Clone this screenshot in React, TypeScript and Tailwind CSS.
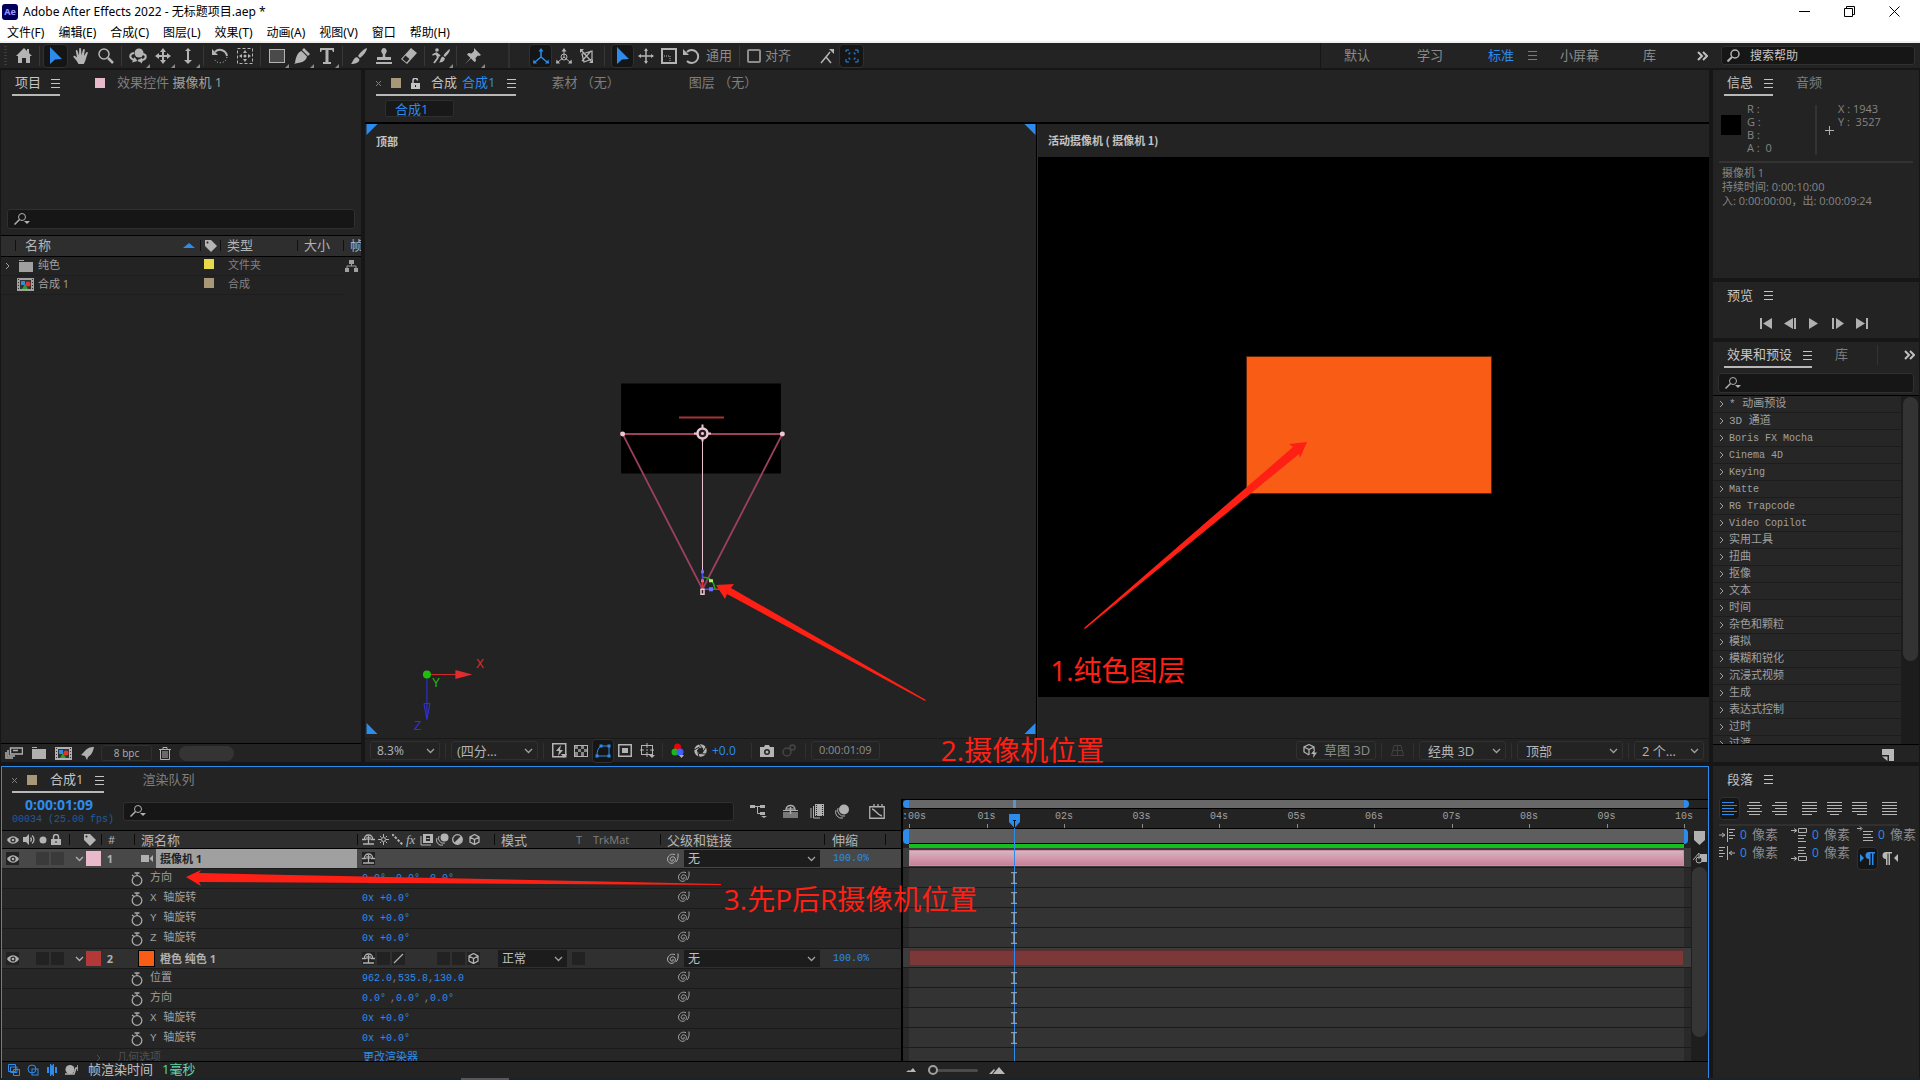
import React from "react";

type Kids = { children?: React.ReactNode };

/* ---------- icons ---------- */

function Ic({ children, w = 16, h = 16, vb, className = "" }: Kids & { w?: number; h?: number; vb?: string; className?: string }) {
  return (
    <svg width={w} height={h} viewBox={vb ?? `0 0 ${w} ${h}`} className={`shrink-0 ${className}`} fill="currentColor" aria-hidden="true">
      {children}
    </svg>
  );
}

const line = { fill: "none", stroke: "currentColor" } as const;

const Home = () => <Ic><path d="M8 0 0 8h2v7h4v-5h4v5h4V8h2L13 5V1h-2v2z" /></Ic>;
const Cursor = () => <Ic w={14} h={18}><path d="M1 0v17l5-4.500 7-.5z" /></Ic>;
const Hand = () => (
  <Ic><path d="M5.500 16C4 13 2.500 11.500.5 9c-.5-1 .8-1.800 1.700-1L4 9.500 2.800 3c-.2-1.200 1.400-1.500 1.700-.3L6 7.500 6.200 1c0-1.300 1.800-1.300 1.900 0l.3 6.300L10 1.700c.4-1.200 2-.9 1.800.4L10.900 8l2.300-3.600c.7-1 2.100-.3 1.600.9-1.500 3.200-1.800 7-4 10.700z" /></Ic>
);
const Lens = () => <Ic><circle cx="6" cy="6" r="5" {...line} strokeWidth="1.500" /><path d="m10 10 5 5" {...line} strokeWidth="2.500" /></Ic>;
const Orbit = () => (
  <Ic w={18}>
    <circle cx="10" cy="5" r="4.500" />
    <path d="M5 5C0 6 0 10 5 12M13 6c5 0 5 5 0 6M9 12.500h5" {...line} strokeWidth="2" />
    <path d="m3 14.500 5.500-1.500-3-4zM9 12.500l4-3v6z" />
  </Ic>
);
const Move4 = () => <Ic><path d="M8 0 5 4h2v3H4V5L0 8l4 3V9h3v3H5l3 4 3-4H9V9h3v2l4-3-4-3v2H9V4h2z" /></Ic>;
const Dolly = () => <Ic w={12}><path d="M5 2h2v10h3l-4 4-4-4h3zM3 3l3-3 3 3z" /></Ic>;
const Rotate = () => (
  <Ic><path d="M3 4c4-4 11-2 12 4" {...line} strokeWidth="2" /><path d="M0 1v6h6z" /><path d="M15 9c-1 7-11 8-13 1" {...line} strokeDasharray="1 2" /></Ic>
);
const AnchorTool = () => (
  <Ic><rect x=".5" y=".5" width="15" height="15" {...line} strokeDasharray="3 2" /><path d="m8 2 2 3H6zM8 14l2-3H6zM2 8l3-2v4zM14 8l-3-2v4z" /><circle cx="8" cy="8" r="1.500" /></Ic>
);
const RectTool = () => <Ic><rect x=".5" y="1.500" width="15" height="13" fill="#4a4a4a" stroke="currentColor" /></Ic>;
const Pen = () => <Ic><path d="M10 0 16 6l-2 2-6-6zM7.500 3 13 8.500c-1 4-4 6-11.500 7L0 16l5.500-6a2 2 0 1 1 1 1L2 14.500 1 15C2 8 4 4 7.500 3z" /></Ic>;
const TypeTool = () => <Ic w={14}><path d="M0 0h14v4h-1l-1-2H8.500v12H11v2H3v-2h2.500V2H2L1 4H0z" /></Ic>;
const Brush = () => <Ic><path d="M16 0c0 3-4 8-7 10L7 8c2-4 6-7 9-8zM6 9l2.500 2.500C8 15 4 16 0 16c2-2 2-6 6-7z" /></Ic>;
const Stamp = () => <Ic><path d="M8 0a3 3 0 0 1 2 5c-1 1-1 3-.5 4H15v3H1V9h5.500c.5-1 .5-3-.5-4a3 3 0 0 1 2-5zM0 14h16v2H0z" /></Ic>;
const Eraser = () => <Ic><path d="M10 0 16 5 6 16 0 11z" /><path d="m1.500 11 3-3.500 4 3.500-3 3.500z" fill="#232323" /></Ic>;
const Roto = () => (
  <Ic w={18}><circle cx="5" cy="2" r="1.800" /><path d="M.5 7 4 5.500 6 9l-1 2-3 4M4 5l4 3" {...line} strokeWidth="1.800" /><path d="M18 1c0 3-3 6-5 8l-1.500-1.500C13 5 16 2 18 1zM11 8.500l2 2c-1 3-3 4-6 4 2-2 1-5 4-6z" /></Ic>
);
const Pin = () => <Ic><path d="M9 0 16 7l-2 1-1-.5L10.500 10l.5 3-1.500 1-3.500-3.500L0 16l5.500-6L2 6.500 3.500 5l3 .5L9 3z" /></Ic>;
const AxisLocal = () => <Ic><path d="M8 9V2M8 9l-6 5M8 9l6 5" {...line} strokeWidth="1.500" /><path d="m8 0 2.500 3.500h-5zM0 15.500l.5-4 3.500 4zM16 15.500l-.5-4-3.500 4z" /></Ic>;
const AxisWorld = () => <Ic><path d="M8 9V2M8 9l-6 5M8 9l6 5" {...line} /><circle cx="8" cy="9" r="3" {...line} /><path d="m8 0 2.500 3.500h-5zM0 15.500l.5-4 3.500 4zM16 15.500l-.5-4-3.500 4z" /></Ic>;
const AxisView = () => <Ic><path d="M3 6l10-3v8l-8 3zM2 2l10 11M12 3 3 13" {...line} strokeWidth="1.300" /><path d="M1 1h4L1 5zM14 15v-4l-4 4z" /></Ic>;
const Plus4 = () => <Ic><path d="M8 1v14M1 8h14" {...line} strokeWidth="1.500" /><path d="m8 0 2 3H6zM8 16l2-3H6zM0 8l3-2v4zM16 8l-3-2v4z" /></Ic>;
const ScaleBox = () => <Ic><rect x="1" y="1" width="14" height="14" {...line} strokeWidth="2" /><path d="M3 8h6v6" {...line} strokeDasharray="1 1" /></Ic>;
const RotateCcw = () => <Ic w={17}><path d="M4 4a6.500 6.500 0 1 1 0 9" {...line} strokeWidth="2" /><path d="M0 1v6h6z" /></Ic>;
const SnapA = () => <Ic w={14}><path d="M1 15 6 9l5 6M6 9l4-5" {...line} strokeWidth="1.500" /><path d="M9 1h5v5z" /></Ic>;
const SnapB = () => <Ic><path d="M2 4V2h3M11 2h3v3M14 11v3h-3M5 14H2v-3M5 6.500V5h1.500M9.500 5H11v1.500M11 9.500V11H9.500M6.500 11H5V9.500" {...line} /></Ic>;
const Ham = () => <Ic w={9} h={9}><path d="M0 0h9v1H0zM0 4h9v1H0zM0 8h9v1H0z" /></Ic>;
const More = () => <Ic w={11} h={10}><path d="m1 1 4 4-4 4M6 1l4 4-4 4" {...line} strokeWidth="2" /></Ic>;
const SearchDown = () => <Ic w={16} h={12}><circle cx="8" cy="4" r="3.500" {...line} /><path d="m5.500 6.500-5 5" {...line} strokeWidth="1.500" /><path d="M10 8h6l-3 3z" /></Ic>;
const SearchIc = () => <Ic w={13} h={13}><circle cx="8" cy="5" r="4" {...line} strokeWidth="1.500" /><path d="m5 8-4.500 4.500" {...line} strokeWidth="2" /></Ic>;
const Tag = () => <Ic w={13} h={13}><path d="M1 1h6l6 6-6 6-6-6z" /><circle cx="3.500" cy="3.500" r="1" fill="#232323" /></Ic>;
const ChevR = () => <Ic w={5} h={8}><path d="m1 1 3 3-3 3" {...line} /></Ic>;
const ChevD = () => <Ic w={9} h={6}><path d="m1 1 3.500 3.500L8 1" {...line} strokeWidth="1.300" /></Ic>;
const Folder = () => <Ic w={14} h={12}><path d="M0 0h5v1H0zM0 2h14v10H0z" /></Ic>;
const CompIc = () => (
  <Ic w={17} h={13}><path d="M0 0h17v13H0z" /><path d="M3 2h11v9H3z" fill="#333" /><path d="M1.500 1v12M15.500 1v12" stroke="#333" strokeDasharray="1 2" /><path d="M4 3h4v4H4z" fill="#2d8ceb" /><circle cx="11" cy="6" r="2.500" fill="#e0352b" /><path d="m8 6 3 5H5z" fill="#2ca02c" /></Ic>
);
const Flow = () => <Ic w={13} h={12}><path d="M4 0h5v4H4zM0 8h4v4H0zM9 8h4v4H9z" /><path d="M6.500 4v2M2 8V6h9v2" {...line} /></Ic>;
const Trash = () => <Ic w={12} h={13}><path d="M0 2.500h12M4 2V.500h4V2M1.500 3v9.500h9V3M4 4v7M6 4v7M8 4v7" {...line} /></Ic>;
const Rocket = () => <Ic w={13} h={13}><path d="M13 0c-1 6-4 9-6 10l-1 3-2-4L0 8l3-3c3-4 6-5 10-5z" /></Ic>;
const Interpret = () => <Ic w={18} h={12}><rect x="5.500" y="1" width="12" height="6" {...line} strokeWidth="1.500" /><path d="M8 3.500h5M3 3v6h7M1 5v6h7" {...line} strokeWidth="1.500" /></Ic>;
const LockOpen = () => <Ic w={9} h={11}><path d="M2 5V2.500a2 2 0 0 1 4.500 0" {...line} strokeWidth="1.500" /><path d="M0 5h9v6H0z" /><path d="M4 7h1v2H4z" fill="#232323" /></Ic>;
const LockIc = () => <Ic w={10} h={11}><path d="M2.500 5V3a2.500 2.500 0 0 1 5 0v2" {...line} strokeWidth="1.500" /><path d="M0 5h10v6H0z" /><path d="M4.500 7h1v2h-1z" fill="#232323" /></Ic>;
const Eye = () => <Ic w={12} h={8}><path d="M0 4c3-5 9-5 12 0-3 5-9 5-12 0z" /><circle cx="6" cy="4" r="2.600" fill="#2a2a2a" /><circle cx="6" cy="4" r="1.300" /></Ic>;
const Speaker = () => <Ic w={12} h={11}><path d="M0 3h3l3-3v11L3 8H0z" /><path d="M7.500 3.500a3 3 0 0 1 0 4M9 1.500a5 5 0 0 1 0 8" {...line} strokeWidth="1.300" /></Ic>;
const Solo = () => <Ic w={8} h={8}><circle cx="4" cy="4" r="3.500" /></Ic>;
const Shy = () => <Ic w={13} h={11}><path d="M2.500 5.500c-1-6 9-6 8 0M0 5.500h4M9 5.500h4M6.500 2v8M1 10h11" {...line} strokeWidth="1.300" /><path d="M4 3h5v3H4z" opacity=".6" /></Ic>;
const Sun = () => <Ic w={11} h={11}><circle cx="5.500" cy="5.500" r="2" {...line} /><path d="M5.500 0v3M5.500 8v3M0 5.500h3M8 5.500h3M2 2l1.500 1.500M7.500 7.500 9 9M9 2 7.500 3.500M3.500 7.500 2 9" {...line} /></Ic>;
const Quality = () => <Ic w={11} h={11}><path d="m0 0 11 11" {...line} strokeWidth="2" strokeDasharray="2.500 1.500" /></Ic>;
const FrameBlend = () => <Ic w={13} h={12}><path d="M3 0h10v9H3z" /><path d="M6 2h4v5H6z" fill="#2a2a2a" /><path d="M6.500 4h3v1h-3z" /><path d="M1 2v9h10" {...line} /></Ic>;
const MBlur = () => <Ic w={13} h={13}><circle cx="8.500" cy="4.500" r="4" /><path d="M3 3a5 5 0 0 0 6 7M1 5a5 5 0 0 0 6 7" {...line} /></Ic>;
const Adjust = () => <Ic w={11} h={11}><circle cx="5.500" cy="5.500" r="4.800" {...line} strokeWidth="1.300" /><path d="M9 2a5 5 0 0 1-7 7z" /></Ic>;
const Cube = () => <Ic w={11} h={11}><path d="M5.500.5 10 3v5l-4.500 2.500L1 8V3zM1 3l4.500 2.500L10 3M5.500 5.500v5" {...line} strokeWidth="1.300" /></Ic>;
const Whip = () => <Ic w={13} h={12}><path d="M6.500 6.500c.8-.8 1.500.5.5 1.300-1.500 1-3.200-.3-2.700-2.300.6-2 3.500-2.300 4.700-.5 1.200 2.200-.3 5-3 5.300C3 10.500.8 8 1.700 5 2.500 2 6 .3 9 1.700M12 .5c.3 4 0 6-2 8.500" {...line} /></Ic>;
const Watch = () => <Ic w={12} h={14}><circle cx="6" cy="8.500" r="4.800" {...line} strokeWidth="1.300" /><path d="M6 1v3M3.500 1h5M1 3l2 1.500" {...line} strokeWidth="1.300" /></Ic>;
const Camcorder = () => <Ic w={12} h={9}><path d="M0 1h8v7H0zM8.500 4.500 12 1v7z" /></Ic>;
const Slash = () => <Ic w={11} h={11}><path d="m1 10 9-9" {...line} strokeWidth="1.300" /></Ic>;
const IBeam = () => <Ic w={8} h={12}><path d="M1 .5h6M1 11.500h6M4 0v12" {...line} strokeWidth="1.500" /></Ic>;
const CloseX = () => <Ic w={5} h={5} className="text-[#808080]"><path d="m0 0 5 5M5 0 0 5" {...line} /></Ic>;

/* ---------- shared parts ---------- */

const cjk = "font-['Open_Sans','Noto_Sans_CJK_SC',sans-serif]";
const mono = "font-['Liberation_Mono','Noto_Sans_CJK_SC',monospace]";

const TOOL_W = { wide: "w-[25px]", mid: "w-[23px]", small: "w-[22px]" };

function Tool({ children, on, more, label, size = "wide" }: Kids & { on?: boolean; more?: boolean; label: string; size?: keyof typeof TOOL_W }) {
  return (
    <button
      aria-label={label}
      className={`relative flex h-6 items-center justify-center rounded-sm ${TOOL_W[size]} ${on ? "border border-[#303030] bg-[#151515] text-[#2d8ceb]" : ""}`}
    >
      {children}
      {more && <span className="absolute right-0 bottom-0 border-b-[4px] border-l-[4px] border-b-[#8a8a8a] border-l-transparent" />}
    </button>
  );
}

const Sep = () => <span className="mx-[3px] h-5 w-px shrink-0 bg-[#383838]" />;

function Tab({ children, on = true }: Kids & { on?: boolean }) {
  return (
    <button className={`flex h-[26px] items-center border-b-2 pt-[2px] whitespace-nowrap ${on ? "border-[#b8b8b8] text-[#c4c4c4]" : "border-transparent text-[#7e7e7e]"}`}>
      {children}
    </button>
  );
}

function Pick({ value, label, className }: { value: string; label: string; className: string }) {
  return (
    <span className={`relative flex items-center ${className}`}>
      <select aria-label={label} defaultValue={value} className="h-full w-full appearance-none bg-transparent pr-4 pl-1 outline-none">
        <option>{value}</option>
      </select>
      <span className="pointer-events-none absolute right-1 text-[#a0a0a0]"><ChevD /></span>
    </span>
  );
}

function SearchBox({ label, className }: { label: string; className: string }) {
  return (
    <label className={`flex items-center rounded-[3px] border border-[#303030] bg-[#161616] pl-[6px] text-[#b0b0b0] ${className}`}>
      <SearchDown />
      <input aria-label={label} className="ml-1 h-full min-w-0 flex-1 bg-transparent outline-none" />
    </label>
  );
}

const swatch = "inline-block size-[10px] shrink-0";

/* ---------- top bars ---------- */

const MENUS = ["文件(F)", "编辑(E)", "合成(C)", "图层(L)", "效果(T)", "动画(A)", "视图(V)", "窗口", "帮助(H)"];

function WindowBars() {
  return (
    <header className="shrink-0 border-b-2 border-[#f0f0f0] bg-white font-['Noto_Sans','Noto_Sans_CJK_SC',sans-serif] text-[12px] text-black">
      <div className="flex h-[23px] items-center pl-[2px]">
        <span className="flex size-4 items-center justify-center rounded-[3px] bg-[#00005b] text-[9px] font-bold text-[#9999ff]">Ae</span>
        <h1 className="ml-[5px]">Adobe After Effects 2022 - 无标题项目.aep *</h1>
        <div className="ml-auto flex h-full items-center gap-[34px] pr-5">
          <button aria-label="最小化"><Ic w={11} h={11}><path d="M0 5h11v1H0z" /></Ic></button>
          <button aria-label="还原"><Ic w={11} h={11}><path d="M.5 2.500h8v8h-8zM2.500 2V.500h8v8H9" {...line} /></Ic></button>
          <button aria-label="关闭"><Ic w={11} h={11}><path d="m.5.500 10 10M10.500.500l-10 10" {...line} /></Ic></button>
        </div>
      </div>
      <nav className="flex h-[18px] items-center gap-[14px] pt-[2px] pl-[7px]">
        {MENUS.map((m) => <button key={m}>{m}</button>)}
      </nav>
    </header>
  );
}

function Toolbar() {
  return (
    <div className="flex h-[25px] shrink-0 items-center bg-[#232323] text-[13px] text-[#b4b4b4]">
      <span className="mx-[4px] h-5 w-[3px] bg-[repeating-linear-gradient(#3c3c3c_0_1px,transparent_1px_3px)]" />
      <Tool label="主页"><Home /></Tool><Sep />
      <Tool label="选取" on><Cursor /></Tool>
      <Tool label="手形"><Hand /></Tool>
      <Tool label="缩放"><Lens /></Tool><Sep />
      <Tool label="绕光标旋转" more><Orbit /></Tool>
      <Tool label="平移" more><Move4 /></Tool>
      <Tool label="推拉" more><Dolly /></Tool><Sep />
      <Tool label="旋转"><Rotate /></Tool>
      <Tool label="锚点"><AnchorTool /></Tool><Sep />
      <Tool label="矩形" more><RectTool /></Tool>
      <Tool label="钢笔" more><Pen /></Tool>
      <Tool label="文字" more><TypeTool /></Tool><Sep />
      <Tool label="画笔"><Brush /></Tool>
      <Tool label="仿制图章"><Stamp /></Tool>
      <Tool label="橡皮擦"><Eraser /></Tool><Sep />
      <Tool label="Roto 笔刷" more><Roto /></Tool><Sep />
      <Tool label="人偶位置" more><Pin /></Tool>
      <span className="mr-[19px] ml-[23px] h-full w-[2px] bg-[#303030]" />
      <Tool label="本地轴" on size="mid"><AxisLocal /></Tool>
      <Tool label="世界轴" size="mid"><AxisWorld /></Tool>
      <Tool label="视图轴" size="mid"><AxisView /></Tool>
      <span className="mx-[6px] h-5 w-px bg-[#383838]" />
      <Tool label="选择" on size="mid"><Cursor /></Tool>
      <Tool label="位置" size="mid"><Plus4 /></Tool>
      <Tool label="缩放模式" size="mid"><ScaleBox /></Tool>
      <Tool label="旋转模式" size="mid"><RotateCcw /></Tool>
      <button className="ml-[3px] text-[#8c8c8c]">通用</button>
      <span className="mx-[7px] h-5 w-px bg-[#383838]" />
      <label className="flex items-center gap-1 text-[#8c8c8c]">
        <input type="checkbox" className="size-[14px] appearance-none rounded-[2px] border-2 border-[#8c8c8c]" />
        对齐
      </label>
      <span className="ml-[23px] flex">
        <Tool label="对齐边缘"><SnapA /></Tool>
        <Tool label="对齐特征" on><SnapB /></Tool>
      </span>
      <nav className="ml-auto flex h-full items-center border-l border-[#161616] pl-[23px] text-[#8c8c8c]">
        <button className="mr-[47px]">默认</button>
        <button className="mr-[45px]">学习</button>
        <button className="mr-[14px] text-[#2d8ceb]">标准</button>
        <button aria-label="工作区菜单" className="mr-[23px] text-[#2d8ceb]"><Ham /></button>
        <button className="mr-[44px]">小屏幕</button>
        <button className="mr-[41px]">库</button>
        <button aria-label="更多" className="mr-[11px] text-[#c0c0c0]"><More /></button>
      </nav>
      <label className="mr-[5px] ml-[2px] flex h-[19px] w-[194px] items-center rounded-[3px] border border-[#303030] bg-[#161616] pl-[5px]">
        <SearchIc />
        <input aria-label="搜索帮助" placeholder="搜索帮助" className="ml-[10px] min-w-0 flex-1 bg-transparent text-[12px] outline-none placeholder:text-[#c4c4c4]" />
      </label>
    </div>
  );
}

/* ---------- project ---------- */

function ProjectPanel() {
  const th = "border-y border-black bg-[#2e2e2e] p-0 text-left font-normal";
  const bar = "my-[4px] h-[11px] w-px shrink-0 bg-[#111]";
  return (
    <section className="flex w-[360px] shrink-0 flex-col overflow-hidden bg-[#232323]">
      <div className="flex pl-[11px] text-[13px]">
        <Tab><span className="mr-[10px] ml-[3px]">项目</span><Ham /></Tab>
        <span className="w-[35px]" />
        <Tab on={false}><i className={`${swatch} mr-3 bg-[#e8b8cb]`} />效果控件&nbsp;<span className="text-[#a0a0a0]">摄像机 1</span></Tab>
      </div>
      <div className="h-[113px]" />
      <SearchBox label="搜索项目" className="mx-[6px] mb-[6px] h-5 shrink-0" />
      <table className="w-full table-fixed border-separate border-spacing-0 text-[11px] text-[#a0a0a0]">
        <colgroup><col className="w-[199px]" /><col className="w-[20px]" /><col className="w-[77px]" /><col className="w-[46px]" /><col /></colgroup>
        <thead className="text-[13px] text-[#b4b4b4]">
          <tr className="h-5">
            <th className={th}><span className="flex items-center"><i className={`${bar} mr-[9px] ml-[14px]`} />名称<i className="mr-[5px] ml-auto border-x-[6px] border-b-[5px] border-x-transparent border-b-[#2d8ceb]" /></span></th>
            <th className={th}><span className="flex items-center gap-[3px]"><i className={bar} /><Tag /></span></th>
            <th className={th}><span className="flex items-center gap-[6px]"><i className={bar} />类型</span></th>
            <th className={th}><span className="flex items-center gap-[6px]"><i className={bar} />大小</span></th>
            <th className={`${th} overflow-hidden`}><span className="flex items-center gap-[6px]"><i className={bar} />帧</span></th>
          </tr>
        </thead>
        <tbody>
          <tr className="h-[19px]">
            <td className="border-b border-[#1d1d1d] p-0"><span className="flex items-center pl-[4px]"><ChevR /><i className="w-[9px]" /><Folder /><span className="ml-[5px]">纯色</span></span></td>
            <td className="border-b border-[#1d1d1d] p-0 pl-[4px]"><i className={`${swatch} block bg-[#e6da4a]`} /></td>
            <td className="border-b border-[#1d1d1d] p-0 pl-[8px] text-[#828282]">文件夹</td>
            <td className="border-b border-[#1d1d1d]" />
            <td className="p-0 pl-[2px]"><Flow /></td>
          </tr>
          <tr className="h-[19px]">
            <td className="border-b border-[#1d1d1d] p-0"><span className="flex items-center pl-[16px]"><CompIc /><span className="ml-[4px]">合成 1</span></span></td>
            <td className="border-b border-[#1d1d1d] p-0 pl-[4px]"><i className={`${swatch} block bg-[#a89878]`} /></td>
            <td className="border-b border-[#1d1d1d] p-0 pl-[8px] text-[#828282]">合成</td>
            <td className="border-b border-[#1d1d1d]" />
            <td />
          </tr>
        </tbody>
      </table>
      <div className="mt-auto flex h-[19px] items-center border-t border-black pl-[4px] text-[#b0b0b0]">
        <button aria-label="解释素材"><Interpret /></button>
        <button aria-label="新建文件夹" className="ml-[9px]"><Folder /></button>
        <button aria-label="新建合成" className="ml-[9px]"><CompIc /></button>
        <button aria-label="项目设置" className="ml-[9px]"><Rocket /></button>
        <button className="mr-[7px] ml-[7px] h-4 w-[51px] rounded-[3px] border border-[#303030] text-[10px]">8 bpc</button>
        <button aria-label="删除"><Trash /></button>
        <span className="ml-[8px] h-[15px] w-[55px] rounded-full bg-[#343434]" />
      </div>
    </section>
  );
}

/* ---------- composition ---------- */

function TopView() {
  return (
    <div className="relative flex-1 overflow-hidden border-r border-black">
      <svg viewBox="365 124 671 615" className="absolute inset-0 h-full w-full" aria-hidden="true">
        <path d="M366 124h11l-11 11zM1036 124h-11l11 11zM366 735h11l-11-11zM1036 735h-11l11-11z" fill="#2d8ceb" />
        <path d="M621 384h160v90H621z" />
        <path d="M679 418h45" stroke="#a83236" strokeWidth="2" />
        <path d="M622.500 434.500h160L702.500 590z" fill="none" stroke="#9c3f60" strokeWidth="1.800" />
        <path d="M702.500 434v140" stroke="#ecc6d4" />
        <path d="M702.500 425v17M694 434h17" stroke="#ecc6d4" strokeWidth="2" />
        <circle cx="702.500" cy="434" r="5" fill="#241c20" stroke="#ecc6d4" strokeWidth="2.500" />
        <circle cx="702.500" cy="434" r="1.500" fill="#ecc6d4" />
        <circle cx="622.500" cy="434.500" r="2.500" fill="#ecc6d4" /><circle cx="782.500" cy="434.500" r="2.500" fill="#ecc6d4" />
        <path d="M702.500 590v-19M702.500 590h10" stroke="#5a4bd8" strokeWidth="1.500" />
        <path d="M702.500 590v-9M713 590h7" stroke="#d8323c" strokeWidth="1.500" />
        <path d="M703 578c7 0 11 4 12 12" fill="none" stroke="#20a020" strokeWidth="1.500" />
        <path d="M709 580h4v3h-4z" fill="#b4f070" /><path d="M709 588h4v4h-4zM701 571h3v3h-3z" fill="#7070ff" /><path d="M701 580h3v3h-3z" fill="#ff6060" />
        <path d="M701 590h3v5h-3z" fill="#222" stroke="#ecc6d4" strokeWidth="1.500" />
        <path d="M426.500 675.500h30" stroke="#e02c2c" /><path d="m455 671 17 4.500-17 4.500z" fill="#e02c2c" />
        <path d="M426.500 676v29M423.500 704.500h6l-3 16zM426.500 704v14" fill="none" stroke="#3030e8" />
        <circle cx="426.500" cy="675.500" r="4" fill="#1ebe0a" />
      </svg>
      <b className="absolute top-[10px] left-[11px] text-[11px] text-[#c4c4c4]">顶部</b>
      <span className="absolute top-[87%] left-[111px] font-['Liberation_Sans',sans-serif] text-[12px] leading-3 text-[#e02c2c]">X</span>
      <span className="absolute top-[90%] left-[67px] font-['Liberation_Sans',sans-serif] text-[12px] leading-3 text-[#1ebe0a]">Y</span>
      <span className="absolute top-[97%] left-[49px] font-['Liberation_Sans',sans-serif] text-[12px] leading-3 text-[#3030e8]">Z</span>
    </div>
  );
}

function CompPanel() {
  const box = "h-[19px] rounded-[3px] border border-[#303030]";
  return (
    <section className="flex min-w-0 flex-1 flex-col bg-[#232323]">
      <div className="flex pl-[11px] text-[13px]">
        <Tab>
          <CloseX />
          <i className={`${swatch} mr-[10px] ml-[10px] bg-[#a89878]`} /><LockOpen />
          <span className="mr-[5px] ml-[11px]">合成</span><span className="mr-[12px] text-[#2d8ceb]">合成1</span><Ham />
        </Tab>
        <span className="w-[35px]" /><Tab on={false}>素材 （无）</Tab>
        <span className="w-[69px]" /><Tab on={false}>图层 （无）</Tab>
      </div>
      <button className="mt-[4px] mb-[5px] ml-[20px] h-[17px] w-[69px] rounded-[2px] border border-[#2e2e2e] bg-[#181818] pl-[9px] text-left text-[13px] leading-[14px] text-[#2d8ceb]">合成1</button>
      <div className="flex min-h-0 flex-1 border-t-2 border-black">
        <TopView />
        <div className="flex flex-1 flex-col border-l border-[#2c2c2c]">
          <b className="flex h-[33px] items-center pl-[10px] font-['Noto_Sans_CJK_SC',sans-serif] text-[11px] whitespace-pre text-[#c4c4c4]">活动摄像机 ( 摄像机 1)</b>
          <div className="relative flex-1 bg-black">
            <div className="absolute top-[36.800%] left-[31%] h-[25.700%] w-[36.600%] border border-[#5c2208] bg-[#f95d15]" />
          </div>
          <div className="h-[41px]" />
        </div>
      </div>
      <div className="flex h-[24px] shrink-0 items-center border-t border-[#191919] pl-[5px] text-[12px] text-[#b4b4b4]">
        <Pick value="8.3%" label="放大率" className={`${box} w-[70px] pl-[2px]`} /><i className="mx-[5px] h-4 w-px bg-[#303030]" />
        <Pick value="(四分…" label="分辨率" className={`${box} w-[87px] pl-px text-[13px]`} /><i className="mr-[4px] ml-[5px] h-4 w-px bg-[#303030]" />
        <Tool label="快速预览" size="small"><Ic w={15} h={15}><rect x=".75" y=".75" width="13" height="13" {...line} strokeWidth="1.500" /><path d="M9 2 4 8h3l-1 5 5-6H8zM9 11h6l-3 4z" /></Ic></Tool>
        <Tool label="透明网格" size="small"><Ic w={14} h={12}><rect x=".5" y=".5" width="13" height="11" {...line} /><path d="M1 1h3v3H1zM7 1h3v3H7zM4 4h3v3H4zM10 4h3v3h-3zM1 7h3v4H1zM7 7h3v4H7z" opacity=".7" /></Ic></Tool>
        <Tool label="蒙版可见性" on size="small"><Ic w={16} h={14}><path d="M2 12c0-5 1-8 4-10h8v10z" {...line} /><path d="M.5 10.500h3v3h-3zM4.500.5h3v3h-3zM12.500.5h3v3h-3zM12.500 10.500h3v3h-3z" /></Ic></Tool>
        <Tool label="目标区域" size="small"><Ic w={14} h={13}><rect x=".75" y=".75" width="12.500" height="11.500" {...line} strokeWidth="1.500" /><path d="M4 4h6v5H4z" /></Ic></Tool>
        <Tool label="网格" size="small"><Ic w={15} h={15}><rect x="1.500" y="2.500" width="11" height="9" {...line} /><path d="M7 0v5M7 9v5M0 7h4M10 7h4M6 7h2" {...line} /><path d="M9 12h6l-3 3z" /></Ic></Tool>
        <i className="mx-[4px] h-4 w-px bg-[#303030]" />
        <Tool label="通道" size="small"><Ic w={14} h={15}><circle cx="6.500" cy="4" r="3.500" fill="#f00000" /><circle cx="4" cy="9" r="3.500" fill="#18b818" /><circle cx="9" cy="9" r="3.500" fill="#4060ff" /><path d="M8 12h5l-2.500 3z" /></Ic></Tool>
        <Tool label="重置曝光度" size="small"><Ic w={13} h={13}><circle cx="6.500" cy="6.500" r="4.500" {...line} strokeWidth="3.500" /><path d="M5 0l4 5M12 3 8 9M12 10l-7-.5M5 13 3.500 6M0 6l5.500-3" stroke="#232323" /></Ic></Tool>
        <span className="ml-[1px] text-[#2d8ceb]">+0.0</span>
        <i className="mr-[4px] ml-[15px] h-4 w-px bg-[#303030]" />
        <Tool label="拍摄快照" size="small"><Ic w={14} h={12}><path d="M0 2h4l1-2h4l1 2h4v10H0z" /><circle cx="7" cy="7" r="3" fill="#232323" /><circle cx="7" cy="7" r="1.500" /></Ic></Tool>
        <span className="text-[#454545]"><Tool label="显示快照" size="small"><Ic w={14} h={13}><circle cx="5" cy="8" r="4" {...line} strokeWidth="1.500" /><circle cx="10.500" cy="3.500" r="2.500" {...line} strokeWidth="1.500" /></Ic></Tool></span>
        <i className="mx-[5px] h-4 w-px bg-[#303030]" />
        <button className={`${box} w-[69px] text-[11px] text-[#909090]`}>0:00:01:09</button>
        <span className="ml-auto" />
        <button className={`${box} flex w-[80px] items-center gap-[6px] pl-[6px] text-[13px] text-[#8c8c8c]`}>
          <Ic w={15} h={15} className="text-[#b0b0b0]"><path d="M6 1.500 11 4v3M6 1.500 1 4v5l5 3M1 4l5 2.500L11 4M6 6.500V12" {...line} strokeWidth="1.300" /><path d="M12 6 8 11h2.500L10 15l4-5.500h-2.500z" /></Ic>
          <span className="whitespace-nowrap">草图 3D</span>
        </button>
        <i className="ml-[5px] h-4 w-px bg-[#303030]" />
        <Ic w={13} h={11} className="mx-[9px] text-[#404040]"><path d="M3 .500h7l2.500 10H.500zM2 5.500h9M6.500 0v11" {...line} /></Ic>
        <i className="mr-[5px] h-4 w-px bg-[#303030]" />
        <Pick value="经典 3D" label="渲染器" className={`${box} w-[87px] pl-1 text-[13px]`} /><i className="mx-[5px] h-4 w-px bg-[#303030]" />
        <Pick value="顶部" label="3D 视图" className={`${box} w-[106px] pl-1 text-[13px]`} /><i className="mx-[5px] h-4 w-px bg-[#303030]" />
        <Pick value="2 个…" label="选择视图布局" className={`${box} mr-[5px] w-[70px] pl-[3px] text-[13px]`} />
      </div>
    </section>
  );
}

/* ---------- timeline ---------- */

type Prop = { kind: "prop"; name: string; value: string[] };
type Layer = { kind: "layer"; n: number; name: string; camera?: boolean };
const ROWS: (Prop | Layer)[] = [
  { kind: "layer", n: 1, name: "摄像机 1", camera: true },
  { kind: "prop", name: "方向", value: ["0.0°", "0.0°", "0.0°"] },
  { kind: "prop", name: "X 轴旋转", value: ["0x +0.0°"] },
  { kind: "prop", name: "Y 轴旋转", value: ["0x +0.0°"] },
  { kind: "prop", name: "Z 轴旋转", value: ["0x +0.0°"] },
  { kind: "layer", n: 2, name: "橙色 纯色 1" },
  { kind: "prop", name: "位置", value: ["962.0", "535.8", "130.0"] },
  { kind: "prop", name: "方向", value: ["0.0°", "0.0°", "0.0°"] },
  { kind: "prop", name: "X 轴旋转", value: ["0x +0.0°"] },
  { kind: "prop", name: "Y 轴旋转", value: ["0x +0.0°"] },
];
const SECONDS = [":00s", "01s", "02s", "03s", "04s", "05s", "06s", "07s", "08s", "09s", "10s"];

const cell = "flex h-[13px] w-[13px] items-center justify-center";
const dark = "bg-[#222]";

function LayerRow({ l }: { l: Layer }) {
  return (
    <div className={`flex h-5 shrink-0 items-center border-b border-[#1a1a1a] text-[#b0b0b0] ${l.camera ? "bg-[#484848]" : "bg-[#303030]"}`}>
      <span className="flex w-[68px] items-center gap-[2px] pl-[4px]">
        <button aria-label="可见性" className={`${cell} ${dark}`}><Eye /></button><i className={cell} />
        <i className={`${cell} ${l.camera ? "bg-[#3a3a3a]" : dark}`} /><i className={`${cell} ${l.camera ? "bg-[#3a3a3a]" : dark}`} />
      </span>
      <span className="ml-[5px]"><ChevD /></span>
      <i className={`ml-[2px] size-[15px] ${l.camera ? "bg-[#e8b8cb]" : "bg-[#b43838]"}`} />
      <b className="w-[18px] text-center text-[11px] leading-4">{l.n}</b>
      <span className="ml-[18px] flex w-[19px] justify-center">{l.camera ? <Camcorder /> : <i className="size-[17px] border border-black bg-[#f95d15]" />}</span>
      <b className={`flex h-[19px] w-[201px] items-center pl-[4px] text-[11px] leading-4 whitespace-pre ${l.camera ? "bg-[#a0a0a0] text-[#222]" : ""}`}>{l.name}</b>
      <span className="ml-[5px] flex w-[128px] gap-[2px]">
        <i className={`${cell} ${dark}`}><Shy /></i>
        {!l.camera && (
          <>
            <i className={`${cell} ${dark}`} /><i className={`${cell} ${dark}`}><Slash /></i><i className={cell} /><i className={cell} />
            <i className={`${cell} ${dark}`} /><i className={`${cell} ${dark}`} /><i className={`${cell} ${dark}`}><Cube /></i>
          </>
        )}
      </span>
      <span className="flex w-[176px] items-center gap-[5px] pl-[8px] text-[12px] text-[#c0c0c0]">
        {!l.camera && <><Pick value="正常" label="模式" className="h-[17px] w-[69px] bg-[#1c1c1c]" /><i className={`${cell} ${dark}`} /></>}
      </span>
      <Whip />
      <Pick value="无" label="父级" className="ml-[5px] h-[17px] w-[136px] bg-[#1c1c1c] text-[12px] text-[#c0c0c0]" />
      <span className={`ml-[13px] text-[10px] text-[#2d8ceb] ${mono}`}>100.0%</span>
    </div>
  );
}

function PropRow({ p }: { p: Prop }) {
  return (
    <div className={`flex h-5 shrink-0 items-center border-b border-[#1b1b1b] bg-[#262626] text-[11px] text-[#a0a0a0] ${mono}`}>
      <span className="ml-[129px] text-[#a8a8a8]"><Watch /></span>
      <span className="ml-[7px] w-[212px]">{p.name}</span>
      <span className="flex w-[315px] text-[10px] text-[#2d8ceb]">
        {p.value.map((v, i) => (
          <span key={i} className="flex min-w-[34px] whitespace-pre">{v}{i < p.value.length - 1 && <span className="ml-auto text-[#808080]">,</span>}</span>
        ))}
      </span>
      <span className="pb-[3px]"><Whip /></span>
    </div>
  );
}

function TimelinePanel() {
  const bar = "h-[11px] w-px shrink-0 bg-[#0c0c0c]";
  return (
    <section className="flex h-[312px] shrink-0 flex-col border border-b-0 border-[#2d8ceb] bg-[#232323]">
      <div className="flex min-h-0 flex-1">
        <div className="flex w-[899px] shrink-0 flex-col overflow-hidden">
          <div className="flex h-[29px] shrink-0 pl-[10px] text-[13px]">
            <Tab>
              <CloseX />
              <i className={`${swatch} mr-[13px] ml-[10px] bg-[#a89878]`} /><span className="mr-[12px]">合成1</span><Ham />
            </Tab>
            <span className="w-[38px]" /><Tab on={false}>渲染队列</Tab>
          </div>
          <div className="flex h-[34px] shrink-0 items-center">
            <div className="ml-[10px] flex h-full w-[110px] flex-col leading-none text-[#2d8ceb]">
              <b className="ml-[13px] pt-[1px] text-[14px] leading-4">0:00:01:09</b>
              <span className={`text-[10px] leading-[14px] whitespace-nowrap text-[#215c96] ${mono}`}>00034 (25.00 fps)</span>
            </div>
            <SearchBox label="搜索图层" className="mb-[4px] ml-[1px] h-[19px] w-[611px]" />
            <div className="mb-[4px] flex items-center pl-[16px] text-[#b0b0b0]">
              <button aria-label="合成微型流程图" className="mr-[16px]"><Ic w={17} h={14}><path d="M0 1h5v3H0zM10 1h5v3h-5zM10 8h5v3h-5zM11 12h6l-3 2z" /><path d="M5 2.500h5M7.500 2.500v7H10" {...line} /></Ic></button>
              <button aria-label="隐藏消隐图层" className="mr-[12px]"><Ic w={15} h={14}><path d="M3 6c0-6 9-6 9 0M7.500 3v7" {...line} strokeWidth="1.500" /><path d="M0 8h15v6H0z" opacity=".6" /><path d="M4 4h7v3H4z" opacity=".6" /><path d="M0 6.500h15" {...line} /></Ic></button>
              <button aria-label="帧混合" className="mr-[11px]"><Ic w={14} h={15}><path d="M5 0h9v12H5z" /><path d="M6.500 1v11M12.500 1v11" stroke="#232323" strokeDasharray="1 1" /><path d="M3.500 2v12H10M1 4v10" {...line} /></Ic></button>
              <button aria-label="运动模糊" className="mr-[20px]"><Ic w={14} h={15}><circle cx="9" cy="5.500" r="5" /><path d="M3 4a6 6 0 0 0 7 8M1 6a6 6 0 0 0 7 8" {...line} /></Ic></button>
              <button aria-label="图表编辑器"><Ic w={16} h={15}><path d="M.750 2.750h14.500v11.500H.750zM3 5c3 0 5 6 10 7M5 0v3M9 0v3M13 0v3" {...line} strokeWidth="1.300" /></Ic></button>
            </div>
          </div>
          <div className="flex h-[19px] shrink-0 items-center border-y border-black bg-[#2e2e2e] text-[13px] leading-4 text-[#b4b4b4]">
            <span className="flex w-[67px] items-center gap-[4px] pl-[5px]"><Eye /><Speaker /><Solo /><LockIc /></span>
            <i className={bar} /><span className="w-[31px] pl-[13px]"><Tag /></span>
            <i className={bar} /><span className="w-[32px] pl-[6px] text-[11px]">#</span>
            <i className={bar} /><span className="w-[222px] pl-[6px]">源名称</span>
            <i className={bar} />
            <span className="flex w-[136px] items-center gap-[3px] pl-[4px]"><Shy /><Sun /><Quality /><em className="w-[11px] font-['Liberation_Serif',serif] text-[13px] leading-3">fx</em><FrameBlend /><MBlur /><Adjust /><i className="w-0" /><Cube /></span>
            <i className={bar} /><span className="w-[75px] pl-[6px]">模式</span><span className="w-[17px] pl-[6px] text-[11px] text-[#808080]">T</span><span className="w-[73px] pl-[6px] text-[11px] text-[#808080]">TrkMat</span>
            <i className={bar} /><span className="w-[163px] pl-[6px]">父级和链接</span>
            <i className={bar} /><span className="w-[60px] pl-[7px]">伸缩</span><i className={bar} />
          </div>
          {ROWS.map((r, i) => (r.kind === "layer" ? <LayerRow key={i} l={r} /> : <PropRow key={i} p={r} />))}
          <div className="flex min-h-0 flex-1 overflow-hidden bg-[#262626] text-[11px] text-[#505050]">
            <span className="mt-[5px] ml-[94px]"><ChevR /></span><span className="ml-[16px] w-[246px]">几何选项</span><button className="h-4 text-[#2d8ceb]">更改渲染器</button>
          </div>
        </div>
        <div className="relative mt-[32px] flex min-w-0 flex-1 flex-col overflow-hidden border-l-2 border-black">
          <div className="flex h-[10px] shrink-0 border-y border-black">
            <i className="w-[6px] rounded-l-full bg-[#2d8ceb]" /><i className="flex-1 bg-[#686868]" /><i className="w-[5px] rounded-r-full bg-[#2d8ceb]" /><i className="w-[19px]" />
          </div>
          <div className={`relative mr-[24px] ml-[6px] h-[20px] shrink-0 border-b border-black text-[10px] text-[#a0a0a0] ${mono}`}>
            {SECONDS.map((s, i) => (
              <span key={s} className={`absolute inset-y-0 w-[30px] -translate-x-1/2 text-center leading-[16px] ${i === 0 ? "pl-[8px]" : ""}`} style={{ left: `${i * 10}%` }}>
                {s}<i className="absolute bottom-0 left-[15px] h-[4px] w-px bg-[#8c8c8c]" />
              </span>
            ))}
          </div>
          <div className="flex h-[15px] shrink-0">
            <i className="w-[6px] rounded-l bg-[#2d8ceb]" /><i className="flex-1 border-b border-black bg-[#5e5e5e]" /><i className="w-[4px] rounded-r bg-[#2d8ceb]" /><i className="w-[20px]" />
          </div>
          <div className="mr-[24px] ml-[6px] h-[5px] shrink-0 border-b border-black bg-[#14be1e]" />
          {ROWS.map((r, i) => (
            <div key={i} className={`mr-[17px] flex h-5 shrink-0 border-b border-[#1b1b1b] pr-[7px] pl-[6px] ${i === 0 ? "-mt-px" : ""} ${r.kind === "layer" ? "bg-[#3c3c3c]" : "bg-[#292929]"}`}>
              {r.kind === "prop" ? <i className="flex-1 bg-[#333]" /> : (
                <i className={`my-px mt-[2px] flex-1 border ${r.camera ? "border-[#c890a4] bg-linear-to-b from-[#d8b4c0] to-[#c88098]" : "border-[#602c2c] bg-[#7c3838]"}`} />
              )}
            </div>
          ))}
          <div className="mr-[17px] flex min-h-0 flex-1 bg-[#292929] pr-[7px] pl-[6px]"><i className="flex-1 bg-[#333]" /></div>
          <div className="pointer-events-none absolute top-px right-[24px] bottom-0 left-[6px]">
            <div className="absolute inset-y-0 left-[13.600%] flex w-[12px] -translate-x-1/2 flex-col items-center">
              <i className="h-[8px] w-[3px] bg-[#5b93cc]" />
              <Ic w={11} h={14} className="mt-[6px] text-[#2d8ceb]"><path d="M0 0h11v8l-5.500 6L0 8z" /><path d="M5 7h1v7H5zM4 6h3v1H4z" fill="#111" /></Ic>
              <i className="w-px flex-1 bg-[#2d8ceb]" />
            </div>
            {ROWS.map((r, i) => r.kind === "prop" && (
              <span key={i} className="absolute left-[13.600%] -translate-x-1/2 text-[#a8b4c0] opacity-80" style={{ top: 52 + i * 20 }}><IBeam /></span>
            ))}
          </div>
          <div className="absolute top-[36px] right-0 bottom-0 flex w-[17px] flex-col items-center bg-[#1e1e1e]">
            <Ic w={11} h={14} className="-mt-1 text-[#b0b0b0]"><path d="M0 0h11v9l-5.500 5L0 9z" /></Ic>
            <Ic w={14} h={12} className="mt-[7px] text-[#b0b0b0]"><path d="M7 2h7v8H7z" /><circle cx="6" cy="8" r="3" fill="#232323" stroke="currentColor" /><path d="m0 8 6-7v6" {...line} /></Ic>
            <i className="mt-[3px] h-[170px] w-[15px] rounded-full bg-[#353535]" />
          </div>
        </div>
      </div>
      <footer className="flex h-[17px] shrink-0 items-center border-t border-black text-[13px] text-[#c0c0c0]">
        <span className="flex w-[904px] items-center pl-[6px]">
          <span className="flex items-center gap-[7px] text-[#2d8ceb]">
            <Ic w={12} h={12}><path d="M.5.500h7v7h-7zM2.500 3v5.500H9V3zM5.500 5.500h6v6h-6z" {...line} /></Ic>
            <Ic w={12} h={12}><circle cx="5" cy="5" r="4" {...line} /><rect x="5" y="5" width="6" height="6" {...line} /></Ic>
            <Ic w={12} h={12}><path d="M4 0h1l1 2 1-2h1v12H7l-1-2-1 2H4zM1 3h2v6H1zM9 3h2v6H9z" /></Ic>
            <Ic w={13} h={11} className="text-[#b0b0b0]"><circle cx="5" cy="4.500" r="4.500" /><path d="M0 9h9l2-6h2M13 0v6" {...line} strokeWidth="1.500" /></Ic>
          </span>
          <span className="ml-[10px]">帧渲染时间</span><span className="ml-[9px] text-[#5fd6a8]">1毫秒</span>
        </span>
        <label className="flex items-center gap-[4px] text-[#b8b8b8]">
          <span className="sr-only">时间缩放</span>
          <Ic w={10} h={4}><path d="m0 4 3-2 1 1 3-3 3 4z" /></Ic>
          <input type="range" defaultValue={0} className="ml-[8px] h-[3px] w-[50px] appearance-none rounded bg-[#4a4a4a] [&::-webkit-slider-thumb]:size-[10px] [&::-webkit-slider-thumb]:appearance-none [&::-webkit-slider-thumb]:rounded-full [&::-webkit-slider-thumb]:border-2 [&::-webkit-slider-thumb]:border-[#a0a0a0] [&::-webkit-slider-thumb]:bg-[#232323]" />
          <Ic w={16} h={7} className="ml-[7px]"><path d="m0 7 5-5 1 1-3 4zM4 7l6-7 6 7z" /></Ic>
        </label>
      </footer>
    </section>
  );
}

/* ---------- right column ---------- */

const EFFECTS = ["* 动画预设", "3D 通道", "Boris FX Mocha", "Cinema 4D", "Keying", "Matte", "RG Trapcode", "Video Copilot", "实用工具", "扭曲", "抠像", "文本", "时间", "杂色和颗粒", "模拟", "模糊和锐化", "沉浸式视频", "生成", "表达式控制", "过时", "过渡"];
const TRANSPORT: [string, string][] = [
  ["第一帧", "M0 0h2v11H0zM12 0v11L3 5.500z"],
  ["上一帧", "M12 0h-2v11h2zM9 0v11L0 5.500z"],
  ["播放", "M1 0v11l9-5.500z"],
  ["下一帧", "M0 0h2v11H0zM4 0v11l8-5.500z"],
  ["最后一帧", "M12 0h-2v11h2zM0 0v11l9-5.500z"],
];
const ALIGN: [string, string][] = [
  ["左对齐", "M0 .5h12M0 3.500h15M0 6.500h12M0 9.500h15M0 12.500h12"],
  ["居中", "M2 .5h11M0 3.500h15M2 6.500h11M0 9.500h15M2 12.500h11"],
  ["右对齐", "M3 .5h12M0 3.500h15M3 6.500h12M0 9.500h15M3 12.500h12"],
  ["末行左对齐", "M0 .5h15M0 3.500h15M0 6.500h15M0 9.500h15M0 12.500h10"],
  ["末行居中", "M0 .5h15M0 3.500h15M0 6.500h15M0 9.500h15M3 12.500h9"],
  ["末行右对齐", "M0 .5h15M0 3.500h15M0 6.500h15M0 9.500h15M5 12.500h10"],
  ["全部对齐", "M0 .5h15M0 3.500h15M0 6.500h15M0 9.500h15M0 12.500h15"],
];

function Indent({ d, label }: { d: string; label: string }) {
  return (
    <label className="flex h-[18px] items-center text-[13px] whitespace-nowrap text-[#8c8c8c]">
      <Ic w={17} h={18} className="text-[#b0b0b0]"><path d={d} {...line} /></Ic>
      <input aria-label={label} defaultValue="0" className="ml-[4px] w-[8px] bg-transparent text-[12px] text-[#2d8ceb] outline-none" />
      <span className="ml-[4px]">像素</span>
    </label>
  );
}

function RightColumn() {
  const panel = "flex flex-col bg-[#232323]";
  return (
    <aside className="flex w-[206px] shrink-0 flex-col gap-1">
      <section className={`${panel} h-[208px] shrink-0`}>
        <div className="flex pl-[11px] text-[13px]">
          <Tab><span className="mr-[11px] ml-[3px]">信息</span><Ham /></Tab><span className="w-[23px]" /><Tab on={false}>音频</Tab>
        </div>
        <div className="mt-[6px] flex h-[57px] pl-[8px] text-[11px] leading-[13px] text-[#858585]">
          <i className="mt-[13px] h-5 w-5 bg-black" />
          <div className="ml-[6px] w-[68px] whitespace-pre"><p>R :</p><p>G :</p><p>B :</p><p>A :  0</p></div>
          <i className="mt-[3px] h-[50px] w-[2px] bg-[#333]" />
          <Ic w={9} h={9} className="mt-[24px] ml-[8px] text-[#b0b0b0]"><path d="M4 0h1v9H4zM0 4h9v1H0z" /></Ic>
          <div className="ml-[4px] whitespace-pre"><p>X : 1943</p><p>Y :  3527</p></div>
        </div>
        <hr className="mx-[6px] mt-[2px] border-t-2 border-[#333]" />
        <div className="mt-[3px] pl-[9px] text-[11px] leading-[14px] whitespace-nowrap text-[#858585]">
          <p>摄像机 1</p><p>持续时间: 0:00:10:00</p><p>入: 0:00:00:00，出: 0:00:09:24</p>
        </div>
      </section>
      <section className={`${panel} h-[56px] shrink-0`}>
        <div className="flex h-[27px] items-center pl-[14px] text-[13px] text-[#c4c4c4]"><span className="mr-[11px]">预览</span><Ham /></div>
        <div className="mt-[9px] ml-[47px] flex gap-[12px] text-[#b0b0b0]">
          {TRANSPORT.map(([l, d]) => <button key={l} aria-label={l}><Ic w={12} h={11}><path d={d} /></Ic></button>)}
        </div>
      </section>
      <section className={`${panel} min-h-0 flex-1`}>
        <div className="flex items-center pr-[4px] pl-[11px] text-[13px]">
          <Tab><span className="mr-[11px] ml-[3px]">效果和预设</span><Ham /></Tab><span className="w-[23px]" /><Tab on={false}>库</Tab>
          <i className="ml-[29px] h-5 w-px bg-[#333]" /><button aria-label="更多面板" className="ml-auto text-[#c0c0c0]"><More /></button>
        </div>
        <SearchBox label="搜索效果" className="mx-[5px] mt-[5px] mb-[2px] h-[20px] shrink-0" />
        <div className="flex min-h-0 flex-1 border-t border-black">
          <ul className={`flex-1 overflow-hidden text-[#a0a0a0] ${mono}`}>
            {EFFECTS.map((e) => (
              <li key={e} className="flex h-[17px] items-center gap-[5px] border-b border-[#1c1c1c] bg-[#262626] pl-[6px]">
                <ChevR /><button className={/^[A-Z]/.test(e) ? "text-[10px]" : "text-[11px]"}>{e}</button>
              </li>
            ))}
          </ul>
          <div className="w-[18px] bg-[#1c1c1c] pt-px pl-[2px]"><i className="block h-[264px] w-[15px] rounded-full bg-[#333]" /></div>
        </div>
        <div className="flex h-[18px] shrink-0 justify-end border-t border-black pt-[2px] pr-[25px] text-[#b8b8b8]">
          <button aria-label="新建动画预设"><Ic w={12} h={12}><path d="M0 0h12v12H7V6H0zM0 7.500h5.500V12z" /></Ic></button>
        </div>
      </section>
      <section className={`${panel} h-[312px] shrink-0 overflow-hidden`}>
        <div className="flex h-[27px] items-center pl-[14px] text-[13px] text-[#c4c4c4]"><span className="mr-[11px]">段落</span><Ham /></div>
        <div className="mt-[4px] flex pl-[6px] text-[#b8b8b8]">
          {ALIGN.map(([l, d], i) => (
            <button key={l} aria-label={l} className={`flex h-[23px] items-center justify-center ${i === 0 ? "w-[21px] rounded-sm border border-[#303030] bg-[#151515] text-[#2d8ceb]" : i === 3 || i === 6 ? "ml-[8px] w-[22px]" : "ml-[3px] w-[22px]"}`}>
              <Ic w={15} h={13}><path d={d} {...line} /></Ic>
            </button>
          ))}
        </div>
        <hr className="mt-[4px] mr-[20px] ml-[6px] border-t-2 border-[#303030]" />
        <div className="flex pl-[6px]">
          <div className="w-[72px]"><Indent label="缩进左边距" d="M0 9h5M3 7l3 2-3 2M8.500 2v14M10 3.500h6M10 6.500h4M10 9.500h6M10 12.500h4" /><Indent label="缩进右边距" d="M0 3.500h6M0 6.500h4M0 9.500h6M0 12.500h4M8.500 2v14M16 9h-5M13 7l-3 2 3 2" /></div>
          <div className="w-[66px]"><Indent label="段前添加空格" d="M0 4.500h5M3 2.500l3 2-3 2M7.500 2.500h8v4h-8zM7 9.500h8M7 12.500h6M7 15.500h8" /><Indent label="段后添加空格" d="M0 14.500h5M3 12.500l3 2-3 2M7.500 12.500h8v4h-8zM7 3.500h8M7 6.500h6M7 9.500h8" /></div>
          <div>
            <Indent label="首行缩进" d="M0 2.500h4M3 .5l2 2-2 2M6 5.500h10M6 8.500h8M6 11.500h10M6 14.500h10" />
            <div className="flex gap-1 pt-[3px] text-[#b8b8b8]">
              <button aria-label="从左到右" className="flex h-[23px] w-[21px] items-center justify-center rounded-sm border border-[#303030] bg-[#151515] text-[#2d8ceb]"><Ic w={16} h={13}><path d="M0 2v8l4-4zM14 0H9a3 3 0 0 0 0 7v6h1.500V1.500h1.500V13h1.500V1.500H15V0z" /></Ic></button>
              <button aria-label="从右到左" className="h-[23px]"><Ic w={16} h={13}><path d="M16 2v8l-4-4zM8 0H4a3 3 0 0 0 0 7v6h1.500V1.500h1V13H8V1.500h2V0z" /></Ic></button>
            </div>
          </div>
        </div>
      </section>
    </aside>
  );
}

/* ---------- notes drawn over the window ---------- */

function Notes() {
  const note = "absolute font-['Open_Sans','Noto_Sans_CJK_SC',sans-serif] text-[28px] leading-8 whitespace-nowrap text-[#ff2015]";
  return (
    <div className="pointer-events-none absolute inset-0">
      <svg viewBox="0 0 1920 1080" preserveAspectRatio="none" className="h-full w-full" fill="#ff2015" aria-hidden="true">
        <path d="m1307 442-18 2 4 3L1084 628l1 1 214-175 1 4z" />
        <path d="m716 585 18-1-3 4 195 112-1 1-198-107-2 5z" />
        <path d="m186 877 15-7-2 3 522 11v1l-522-3 2 4z" />
      </svg>
      <p className={`${note} top-[60.600%] left-[54.700%]`}>1.纯色图层</p>
      <p className={`${note} top-[68%] left-[49%]`}>2.摄像机位置</p>
      <p className={`${note} top-[81.800%] left-[37.700%]`}>3.先P后R摄像机位置</p>
    </div>
  );
}

export default function App() {
  return (
    <div className={`relative flex h-screen flex-col overflow-hidden bg-[#161616] ${cjk}`}>
      <WindowBars />
      <Toolbar />
      <main className="mt-[2px] flex min-h-0 flex-1 gap-1 pr-px">
        <div className="flex min-w-0 flex-1 flex-col gap-1 pl-px">
          <div className="flex min-h-0 flex-1 gap-1"><ProjectPanel /><CompPanel /></div>
          <TimelinePanel />
        </div>
        <RightColumn />
      </main>
      <div className="flex h-[2px] shrink-0 bg-[#1c222b]"><i className="ml-[24%] w-[48px] bg-[#55585c]" /></div>
      <Notes />
    </div>
  );
}
